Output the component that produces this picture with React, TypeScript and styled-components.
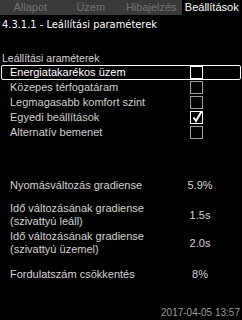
import React from 'react';
import styled, { createGlobalStyle } from 'styled-components';

const GlobalStyle = createGlobalStyle`
  html, body {
    margin: 0;
    padding: 0;
    background: #000;
  }
`;

const Screen = styled.div`
  width: 242px;
  height: 320px;
  background: #000;
  color: #d4d4d4;
  font-family: 'Liberation Sans', Arial, sans-serif;
  font-size: 11px;
  display: flex;
  flex-direction: column;
  overflow: hidden;
`;

const TabBar = styled.div`
  display: flex;
  height: 15px;
  background: #3a3a3a;
`;

const Tab = styled.div<{ $active?: boolean }>`
  flex: 1;
  text-align: center;
  line-height: 15px;
  font-size: 11px;
  white-space: nowrap;
  color: ${({ $active }) => ($active ? '#fff' : '#737373')};
  background: ${({ $active }) => ($active ? '#000' : 'transparent')};
`;

const Title = styled.div`
  margin-top: 3px;
  padding-left: 2px;
  line-height: 13px;
  color: #fff;
  font-family: 'Liberation Sans Narrow', 'DejaVu Sans Condensed', 'Liberation Sans', sans-serif;
  font-size: 11px;
  white-space: nowrap;
`;

const SectionHeading = styled.div`
  margin-top: 21px;
  padding-left: 2px;
  line-height: 13px;
  font-size: 10.5px;
  color: #d6d6d6;
`;

const OptionList = styled.div`
  display: flex;
  flex-direction: column;
`;

const OptionRow = styled.div<{ $selected?: boolean }>`
  display: flex;
  align-items: center;
  height: 15px;
  margin: 0 1px;
  padding-left: 8px;
  box-sizing: border-box;
  border: 1px solid ${({ $selected }) => ($selected ? '#fff' : 'transparent')};
  border-radius: 2px;
  line-height: 13px;
  color: ${({ $selected }) => ($selected ? '#fff' : '#cfcfcf')};
`;

const OptionLabel = styled.span`
  flex: 1;
  white-space: nowrap;
`;

const CheckBox = styled.span<{ $bright?: boolean }>`
  position: relative;
  width: 13px;
  height: 13px;
  margin-right: 37px;
  box-sizing: border-box;
  border: 1px solid ${({ $bright }) => ($bright ? '#fff' : '#9c9c9c')};
`;

const Tick = styled.svg`
  position: absolute;
  left: 0;
  top: -2px;
  width: 13px;
  height: 14px;
`;

const ParamList = styled.div`
  display: flex;
  flex-direction: column;
`;

const ParamRow = styled.div<{ $gap: number }>`
  display: grid;
  grid-template-columns: 1fr 50px;
  align-items: center;
  margin-top: ${({ $gap }) => $gap}px;
  padding: 0 17px 0 10px;
  line-height: 13px;
  color: #d4d4d4;
`;

const ParamValue = styled.span`
  text-align: center;
  white-space: nowrap;
`;

const Footer = styled.div`
  margin-top: auto;
  padding: 0 2px 1px 0;
  text-align: right;
  font-size: 10px;
  line-height: 12px;
  color: #9a9a9a;
`;

const options = [
  { label: 'Energiatakarékos üzem', checked: false },
  { label: 'Közepes térfogatáram', checked: false },
  { label: 'Legmagasabb komfort szint', checked: false },
  { label: 'Egyedi beállítások', checked: true },
  { label: 'Alternatív bemenet', checked: false },
];

const params = [
  { label: ['Nyomásváltozás gradiense'], value: '5.9%', gap: 39 },
  { label: ['Idő változásának gradiense', '(szivattyú leáll)'], value: '1.5s', gap: 10 },
  { label: ['Idő változásának gradiense', '(szivattyú üzemel)'], value: '2.0s', gap: 2 },
  { label: ['Fordulatszám csökkentés'], value: '8%', gap: 12 },
];

export default function App() {
  return (
    <>
      <GlobalStyle />
      <Screen>
        <TabBar>
          <Tab>Állapot</Tab>
          <Tab>Üzem</Tab>
          <Tab>Hibajelzés</Tab>
          <Tab $active>Beállítások</Tab>
        </TabBar>
        <Title>4.3.1.1 - Leállítási paraméterek</Title>
        <SectionHeading>Leállítási araméterek</SectionHeading>
        <OptionList>
          {options.map((o, i) => (
            <OptionRow key={o.label} $selected={i === 0}>
              <OptionLabel>{o.label}</OptionLabel>
              <CheckBox $bright={i === 0 || o.checked}>
                {o.checked && (
                  <Tick viewBox="0 0 13 14">
                    <path d="M2.5 7.5 L5 11 L10.5 1.5" fill="none" stroke="#fff" strokeWidth="2" />
                  </Tick>
                )}
              </CheckBox>
            </OptionRow>
          ))}
        </OptionList>
        <ParamList>
          {params.map((p) => (
            <ParamRow key={p.label.join()} $gap={p.gap}>
              <span>
                {p.label.map((l) => (
                  <div key={l}>{l}</div>
                ))}
              </span>
              <ParamValue>{p.value}</ParamValue>
            </ParamRow>
          ))}
        </ParamList>
        <Footer>2017-04-05 13:57</Footer>
      </Screen>
    </>
  );
}
